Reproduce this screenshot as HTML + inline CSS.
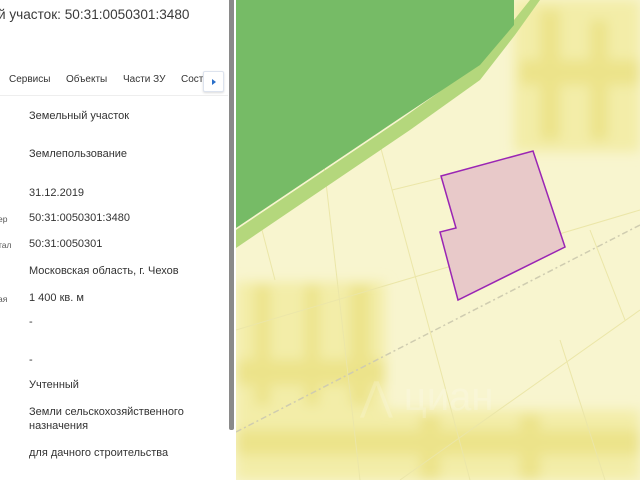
<!DOCTYPE html>
<html><head><meta charset="utf-8"><style>
*{margin:0;padding:0;box-sizing:border-box}
body{width:640px;height:480px;overflow:hidden;position:relative;background:#fff;font-family:"Liberation Sans","DejaVu Sans",sans-serif;color:#333}
.t{position:absolute;white-space:nowrap}
.title{left:-2px;top:7px;font-size:13.6px;color:#3a3a3a}
.tab{top:74px;font-size:10px;color:#333}
.v{left:29px;font-size:11px;color:#333}
.l{left:-2px;font-size:8.5px;color:#555}
</style></head><body>
<div class="t title">й участок: 50:31:0050301:3480</div>
<div class="t tab" style="left:9px">Сервисы</div>
<div class="t tab" style="left:66px">Объекты</div>
<div class="t tab" style="left:123px">Части ЗУ</div>
<div class="t tab" style="left:181px">Соста</div>
<div style="position:absolute;left:222px;top:74px;width:6px;height:13px;border-left:1px solid #333"></div>
<div style="position:absolute;left:203px;top:71px;width:21px;height:21px;background:#fff;border:1px solid #dde3ee;border-radius:2px;box-shadow:0 1px 2px rgba(0,0,0,.15)"><div style="position:absolute;left:8px;top:7px;width:0;height:0;border-top:3px solid transparent;border-bottom:3px solid transparent;border-left:4px solid #2a6fc9"></div></div>
<div style="position:absolute;left:0;top:95px;width:228px;height:1px;background:#eee"></div>
<div class="t v" style="top:110px">Земельный участок</div>
<div class="t v" style="top:148px">Землепользование</div>
<div class="t v" style="top:187px">31.12.2019</div>
<div class="t l" style="top:214px">ер</div>
<div class="t v" style="top:212px">50:31:0050301:3480</div>
<div class="t l" style="top:240px">тал</div>
<div class="t v" style="top:238px">50:31:0050301</div>
<div class="t v" style="top:265px">Московская область, г. Чехов</div>
<div class="t l" style="top:294px">ая</div>
<div class="t v" style="top:292px">1 400 кв. м</div>
<div class="t v" style="top:316px">-</div>
<div class="t v" style="top:354px">-</div>
<div class="t v" style="top:379px">Учтенный</div>
<div class="t v" style="top:406px">Земли сельскохозяйственного</div>
<div class="t v" style="top:420px">назначения</div>
<div class="t v" style="top:447px">для дачного строительства</div>
<div style="position:absolute;left:229px;top:0;width:5px;height:430px;background:#8a8a8a;border-radius:0 0 2px 2px"></div>
<svg style="position:absolute;left:236px;top:0" width="404" height="480" viewBox="236 0 404 480">
<defs><filter id="b" x="-20%" y="-20%" width="140%" height="140%"><feGaussianBlur stdDeviation="6"/></filter></defs>
<rect x="236" y="0" width="404" height="480" fill="#f8f5cf"/>
<g fill="#ece38a" filter="url(#b)">
<rect x="514" y="0" width="126" height="152" fill="#f3eda8"/>
<rect x="540" y="10" width="20" height="130"/><rect x="520" y="60" width="120" height="25"/><rect x="590" y="20" width="18" height="120"/>
<rect x="236" y="282" width="149" height="128" fill="#f3eda8"/>
<rect x="255" y="285" width="15" height="120"/><rect x="305" y="285" width="14" height="120"/><rect x="350" y="285" width="20" height="120"/><rect x="236" y="360" width="149" height="25"/>
<rect x="236" y="410" width="404" height="70" fill="#f3eda8"/>
<rect x="236" y="430" width="404" height="25"/><rect x="420" y="415" width="20" height="65"/><rect x="520" y="415" width="20" height="65"/>
</g>
<g stroke="#ebe6a8" stroke-width="1" fill="none">
<line x1="320" y1="130" x2="360" y2="480"/><line x1="380" y1="145" x2="470" y2="480"/><line x1="262" y1="230" x2="275" y2="280"/>
<line x1="392" y1="190" x2="441" y2="178"/><line x1="236" y1="330" x2="640" y2="210"/><line x1="400" y1="480" x2="640" y2="310"/>
<line x1="590" y1="230" x2="625" y2="320"/><line x1="560" y1="340" x2="605" y2="480"/>
</g>
<line x1="236" y1="432" x2="640" y2="225" stroke="#cfccb0" stroke-width="1.5" stroke-dasharray="6,3,2,3"/>
<path d="M236,248 L236,230 L400,120 L470,70 L510,25 L530,0 L540,0 L515,35 L480,80 L410,130 Z" fill="#b4d77c"/>
<path d="M236,0 L514,0 L514,25 L480,65 L400,118 L236,228 Z" fill="#76bb66"/>
<path d="M441,176 L533,151 L565,247 L458,300 L440,232 L456,228 Z" fill="#e8c9c9" stroke="#9a25b4" stroke-width="1.5"/>
<text x="360" y="410" font-size="40" fill="#fff" fill-opacity=".18" font-family="Liberation Sans">⋀ циан</text>
</svg>
</body></html>
